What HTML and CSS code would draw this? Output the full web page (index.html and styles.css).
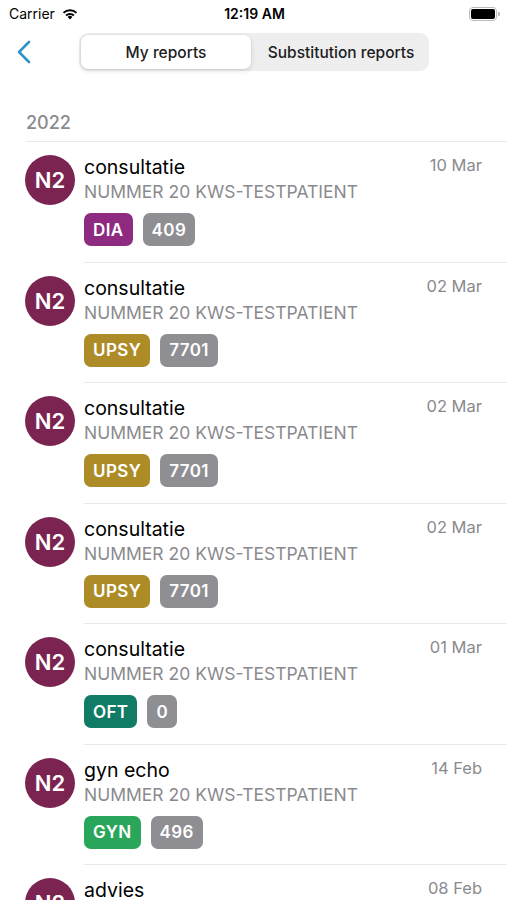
FILE: index.html
```html
<!DOCTYPE html>
<html lang="en">
<head>
<meta charset="UTF-8">
<meta name="viewport" content="width=device-width, initial-scale=1.0">
<title>My reports</title>
<link rel="stylesheet" href="styles.css">
</head>
<body>
  <div class="status-bar">
    <div class="carrier">
      Carrier
      <svg width="18" height="13" viewBox="0 0 18 13">
        <path d="M9 12.5 L6.6 10 A3.4 3.4 0 0 1 11.4 10 Z" fill="#000"/>
        <path d="M4.4 7.8 A6.6 6.6 0 0 1 13.6 7.8 L12.2 9.2 A4.6 4.6 0 0 0 5.8 9.2 Z" fill="#000"/>
        <path d="M1.8 5.2 A10.2 10.2 0 0 1 16.2 5.2 L14.8 6.6 A8.2 8.2 0 0 0 3.2 6.6 Z" fill="#000"/>
      </svg>
    </div>
    <div class="time">12:19 AM</div>
    <div class="battery">
      <span class="battery-body"><span class="battery-fill"></span></span>
      <span class="battery-cap"></span>
    </div>
  </div>

  <div class="nav-bar">
    <svg class="back" width="16" height="24" viewBox="0 0 16 24">
      <path d="M13 2 L3 12 L13 22" fill="none" stroke="#2f93c9" stroke-width="2.6" stroke-linecap="round" stroke-linejoin="round"/>
    </svg>
    <div class="segmented">
      <div class="segment active">My reports</div>
      <div class="segment">Substitution reports</div>
    </div>
  </div>

  <div class="section-header">2022</div>

  <ul class="reports">
    <li class="report">
      <div class="avatar">N2</div>
      <div class="report-body">
        <div class="report-top">
          <span class="title">consultatie</span>
          <span class="date">10 Mar</span>
        </div>
        <div class="patient">NUMMER 20 KWS-TESTPATIENT</div>
        <div class="badges">
          <span class="badge dia">DIA</span>
          <span class="badge num">409</span>
        </div>
      </div>
    </li>
    <li class="report">
      <div class="avatar">N2</div>
      <div class="report-body">
        <div class="report-top">
          <span class="title">consultatie</span>
          <span class="date">02 Mar</span>
        </div>
        <div class="patient">NUMMER 20 KWS-TESTPATIENT</div>
        <div class="badges">
          <span class="badge upsy">UPSY</span>
          <span class="badge num">7701</span>
        </div>
      </div>
    </li>
    <li class="report">
      <div class="avatar">N2</div>
      <div class="report-body">
        <div class="report-top">
          <span class="title">consultatie</span>
          <span class="date">02 Mar</span>
        </div>
        <div class="patient">NUMMER 20 KWS-TESTPATIENT</div>
        <div class="badges">
          <span class="badge upsy">UPSY</span>
          <span class="badge num">7701</span>
        </div>
      </div>
    </li>
    <li class="report">
      <div class="avatar">N2</div>
      <div class="report-body">
        <div class="report-top">
          <span class="title">consultatie</span>
          <span class="date">02 Mar</span>
        </div>
        <div class="patient">NUMMER 20 KWS-TESTPATIENT</div>
        <div class="badges">
          <span class="badge upsy">UPSY</span>
          <span class="badge num">7701</span>
        </div>
      </div>
    </li>
    <li class="report">
      <div class="avatar">N2</div>
      <div class="report-body">
        <div class="report-top">
          <span class="title">consultatie</span>
          <span class="date">01 Mar</span>
        </div>
        <div class="patient">NUMMER 20 KWS-TESTPATIENT</div>
        <div class="badges">
          <span class="badge oft">OFT</span>
          <span class="badge num">0</span>
        </div>
      </div>
    </li>
    <li class="report">
      <div class="avatar">N2</div>
      <div class="report-body">
        <div class="report-top">
          <span class="title">gyn echo</span>
          <span class="date">14 Feb</span>
        </div>
        <div class="patient">NUMMER 20 KWS-TESTPATIENT</div>
        <div class="badges">
          <span class="badge gyn">GYN</span>
          <span class="badge num">496</span>
        </div>
      </div>
    </li>
    <li class="report">
      <div class="avatar">N2</div>
      <div class="report-body">
        <div class="report-top">
          <span class="title">advies</span>
          <span class="date">08 Feb</span>
        </div>
      </div>
    </li>
  </ul>
</body>
</html>
```

FILE: styles.css
```css
body {
  font-family: 'Inter', 'Liberation Sans', sans-serif;
  margin: 0;
  padding: 0;
  background-color: #fff;
  color: #000;
  height: 900px;
  overflow: hidden;
}

/* status bar */
.status-bar {
  height: 28px;
  display: flex;
  align-items: center;
  justify-content: space-between;
  padding: 0 7px 0 9px;
  font-size: 14px;
}

.carrier {
  flex: 1;
  display: flex;
  align-items: center;
  gap: 6px;
  margin-top: -2px;
}

.time {
  font-weight: 600;
  margin-top: -2px;
}

.battery {
  flex: 1;
  display: flex;
  justify-content: flex-end;
  align-items: center;
}

.battery-body {
  width: 24px;
  height: 10px;
  border: 1.5px solid #bbb;
  border-radius: 4px;
  padding: 1px;
  display: flex;
}

.battery-fill {
  flex: 1;
  background: #000;
  border-radius: 2px;
}

.battery-cap {
  width: 2px;
  height: 4px;
  background: #bbb;
  border-radius: 0 1px 1px 0;
  margin-left: 1px;
}

/* navigation */
.nav-bar {
  height: 48px;
  display: flex;
  align-items: center;
  padding-left: 16px;
}

.segmented {
  margin-left: 47px;
  width: 346px;
  height: 34px;
  padding: 2px;
  background: #eeeeef;
  border-radius: 9px;
  display: flex;
}

.segment {
  flex: 1;
  display: flex;
  align-items: center;
  justify-content: center;
  font-size: 15.5px;
  font-weight: 500;
  color: #1c1c1e;
  border-radius: 7px;
}

.segment.active {
  flex: 0 0 170px;
  background: #fff;
  box-shadow: 0 2px 5px rgba(0, 0, 0, 0.12), 0 0 0 0.5px rgba(0, 0, 0, 0.06);
}

.segment + .segment {
  padding-left: 4px;
}

/* section */
.section-header {
  margin: 36px 0 0 26px;
  padding-bottom: 7px;
  font-size: 18px;
  font-weight: 500;
  color: #8a8a8e;
  border-bottom: 1px solid #e9e9ec;
  line-height: 22px;
}

/* report list */
.reports {
  list-style: none;
  margin: 0;
  padding: 0;
}

.report {
  display: flex;
  padding: 13px 25px 0 25px;
  gap: 9px;
}

.avatar {
  flex: 0 0 50px;
  height: 50px;
  border-radius: 50%;
  background: #7b2452;
  color: #fff;
  font-size: 22px;
  font-weight: 600;
  display: flex;
  align-items: center;
  justify-content: center;
}

.report-body {
  flex: 1;
  padding-bottom: 15.5px;
  border-bottom: 1px solid #e9e9ec;
  margin-right: -25px;
  padding-right: 25px;
}

.report-top {
  display: flex;
  justify-content: space-between;
  align-items: baseline;
}

.title {
  font-size: 19.5px;
  line-height: 24px;
}

.date {
  font-size: 16.5px;
  color: #8a8a8e;
  position: relative;
  top: -3px;
}

.patient {
  font-size: 17.5px;
  line-height: 24px;
  color: #8a8a8e;
  margin-top: 1px;
}

.badges {
  display: flex;
  gap: 10px;
  margin-top: 9px;
}

.badge {
  height: 33px;
  padding: 0 9px;
  border-radius: 7px;
  display: flex;
  align-items: center;
  color: #fff;
  font-size: 17px;
  font-weight: 600;
  letter-spacing: 0.4px;
}

.badge.dia { background: #8e2b80; }
.badge.num { background: #8e8e93; }
.badge.upsy { background: #ad8c27; }
.badge.oft { background: #107c65; }
.badge.gyn { background: #29a65a; }
```
